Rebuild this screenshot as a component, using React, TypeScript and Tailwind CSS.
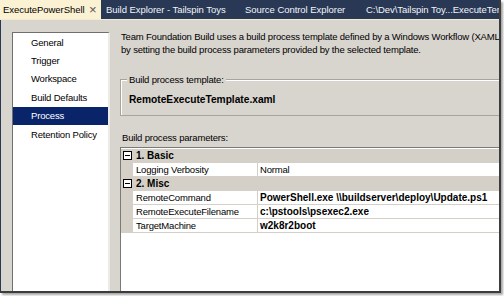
import React from 'react';

const navItems = ['General', 'Trigger', 'Workspace', 'Build Defaults', 'Process', 'Retention Policy'];

const groups = [
  {
    title: '1. Basic',
    rows: [{ name: 'Logging Verbosity', value: 'Normal', bold: false }],
  },
  {
    title: '2. Misc',
    rows: [
      { name: 'RemoteCommand', value: 'PowerShell.exe \\\\buildserver\\deploy\\Update.ps1', bold: true },
      { name: 'RemoteExecuteFilename', value: 'c:\\pstools\\psexec2.exe', bold: true },
      { name: 'TargetMachine', value: 'w2k8r2boot', bold: true },
    ],
  },
];

const Collapse = () => (
  <svg width="9" height="9" viewBox="0 0 9 9" className="block">
    <rect x="0.5" y="0.5" width="8" height="8" fill="#fff" stroke="#000" />
    <path d="M2 4.5h5" stroke="#000" />
  </svg>
);

const App = () => {
  return (
    <div
      className="w-[504px] h-[296px] bg-white text-[9.5px] tracking-[-0.18px] leading-[13px] text-black"
      style={{ fontFamily: '"Liberation Sans", Arial, sans-serif' }}
    >
      <div className="w-[501px] h-[293px] flex flex-col overflow-hidden border-r-2 border-b-2 border-[#3c3c3c] shadow-[2px_2px_2px_rgba(0,0,0,0.35)]">
        {/* tab strip */}
        <div className="h-[19px] shrink-0 bg-[#293955] flex items-stretch whitespace-nowrap text-[9.5px] tracking-[-0.05px]">
          <div className="w-[101px] shrink-0 bg-[#fbf1d3] flex items-center pl-[3px]">
            <span className="w-[86px] shrink-0">ExecutePowerShell</span>
            <span className="text-[#555] text-[13px]">×</span>
          </div>
          <div className="flex items-center text-[#f2f4f8] pl-[5px]">
            <span className="w-[139px] shrink-0">Build Explorer - Tailspin Toys</span>
            <span className="w-[121px] shrink-0">Source Control Explorer</span>
            <span>C:\Dev\Tailspin Toy...ExecuteTemplate.xaml</span>
          </div>
        </div>
        <div className="h-[1px] shrink-0 bg-[#f3ead0]" />

        {/* body */}
        <div className="flex-1 flex bg-[#d8d4ce] border-l border-[#293955] min-h-0">
          <div className="w-[109px] shrink-0 pl-[11px] pt-[12px] flex flex-col">
            <div className="flex-1 bg-white border-t border-l border-[#6f6f6f] border-r-2 border-r-[#ecebe6]">
              {navItems.map((item) => (
                <div
                  key={item}
                  className={
                    item === 'Process'
                      ? 'h-[18.4px] flex items-center pl-[18px] bg-[#0a246a] text-white'
                      : 'h-[18.4px] flex items-center pl-[18px]'
                  }
                >
                  {item}
                </div>
              ))}
            </div>
          </div>

          <div className="flex-1 min-w-0 pl-[10px] pt-[10px] flex flex-col">
            <div className="pl-[1px] whitespace-nowrap">
              <div>Team Foundation Build uses a build process template defined by a Windows Workflow (XAML) file</div>
              <div>by setting the build process parameters provided by the selected template.</div>
            </div>

            <div className="relative mt-[23px] h-[37px] w-[400px] shrink-0 border border-[#a8a49c] shadow-[inset_1px_1px_0_#fff]">
              <span className="absolute left-[6px] top-[-7px] px-[2px] bg-[#d8d4ce]">Build process template:</span>
              <div className="pl-[8px] pt-[13px] font-bold text-[10.2px] tracking-normal">RemoteExecuteTemplate.xaml</div>
            </div>

            <div className="mt-[15px] pl-[2px]">Build process parameters:</div>

            <div className="mt-[3px] flex-1 bg-white border-t border-l border-[#7a7a7a] pt-[1px] whitespace-nowrap">
              {groups.map((g) => (
                <div key={g.title}>
                  <div className="h-[14px] flex items-center bg-[#d4d0c8] border-b border-[#d4d0c8]">
                    <div className="w-[12px] shrink-0 flex justify-center">
                      <Collapse />
                    </div>
                    <span className="pl-[3px] font-bold text-[10px] tracking-normal">{g.title}</span>
                  </div>
                  {g.rows.map((r) => (
                    <div key={r.name} className="h-[14px] flex">
                      <div className="w-[12px] shrink-0 bg-[#d4d0c8]" />
                      <div className="w-[125px] shrink-0 pl-[3px] border-r border-b border-[#d4d0c8] flex items-center overflow-hidden">
                        {r.name}
                      </div>
                      <div
                        className={
                          r.bold
                            ? 'flex-1 min-w-0 pl-[2px] border-b border-[#d4d0c8] flex items-center font-bold text-[10px] tracking-normal'
                            : 'flex-1 min-w-0 pl-[2px] border-b border-[#d4d0c8] flex items-center'
                        }
                      >
                        {r.value}
                      </div>
                    </div>
                  ))}
                </div>
              ))}
            </div>
          </div>
        </div>
      </div>
    </div>
  );
};

export default App;
